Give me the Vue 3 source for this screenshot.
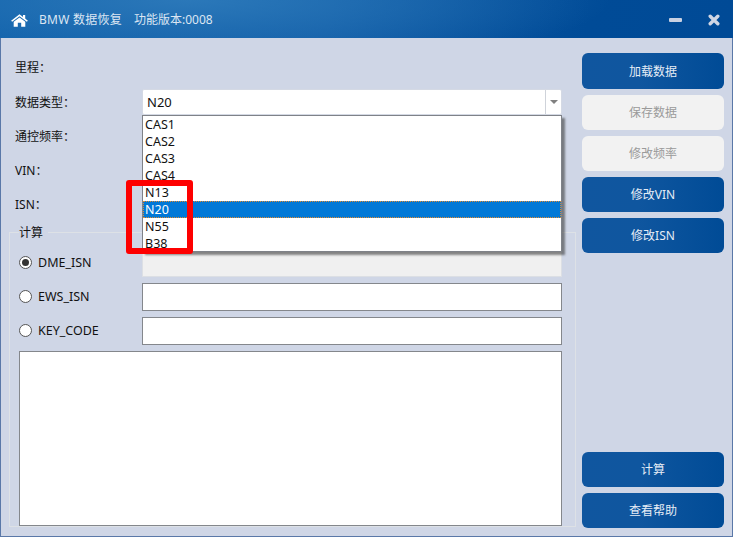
<script setup>
const options = ['CAS1', 'CAS2', 'CAS3', 'CAS4', 'N13', 'N20', 'N55', 'B38']
const selected = 'N20'
const topActions = [
  { label: '加载数据', disabled: false },
  { label: '保存数据', disabled: true },
  { label: '修改频率', disabled: true },
  { label: '修改VIN', disabled: false },
  { label: '修改ISN', disabled: false }
]
const bottomActions = ['计算', '查看帮助']
const radios = [
  { label: 'DME_ISN', checked: true, disabled: true },
  { label: 'EWS_ISN', checked: false, disabled: false },
  { label: 'KEY_CODE', checked: false, disabled: false }
]
</script>

<template>
  <div class="window">
    <header class="titlebar">
      <svg class="home" viewBox="0 0 17 15" width="17" height="13" preserveAspectRatio="none">
        <path d="M8.5 0.4 L12 3.4 V1.2 H14.2 V5.3 L16.9 7.7 L15.8 8.9 L8.5 2.6 L1.2 8.9 L0.1 7.7 Z" fill="#fff" />
        <path d="M8.5 3.9 L14.3 8.9 V14.6 H10.2 V10.2 H6.8 V14.6 H2.7 V8.9 Z" fill="#fff" />
      </svg>
      <span class="title name">BMW 数据恢复</span>
      <span class="title version">功能版本:0008</span>
      <span class="spacer"></span>
      <svg class="win-btn" viewBox="0 0 13 4" width="13" height="4">
        <rect width="13" height="4" rx="1" fill="#c9d1e2" />
      </svg>
      <svg class="win-btn close" viewBox="0 0 12 12" width="12" height="12">
        <path d="M2.2 2.2 L9.8 9.8 M9.8 2.2 L2.2 9.8" stroke="#d0d6e4" stroke-width="3.4" stroke-linecap="round" />
      </svg>
    </header>

    <main class="content">
      <section class="left">
        <div class="row first"><label>里程：</label></div>
        <div class="row">
          <label>数据类型：</label>
          <div class="combo">
            <span class="combo-value">{{ selected }}</span>
            <span class="combo-arrow"><i></i></span>
            <ul class="dropdown">
              <li v-for="o in options" :key="o" :class="{ active: o === selected }">{{ o }}</li>
            </ul>
          </div>
        </div>
        <div class="row"><label>通控频率：</label><div class="field"></div></div>
        <div class="row"><label>VIN：</label><div class="field"></div></div>
        <div class="row"><label>ISN：</label><div class="field"></div></div>

        <fieldset class="group">
          <legend>计算</legend>
          <div v-for="r in radios" :key="r.label" class="radio-row">
            <span class="radio" :class="{ checked: r.checked }"></span>
            <span class="radio-label">{{ r.label }}</span>
            <div class="field" :class="{ off: r.disabled }"></div>
          </div>
          <div class="output"></div>
        </fieldset>

        <div class="marker"></div>
      </section>

      <aside class="right">
        <div class="btns">
          <button v-for="a in topActions" :key="a.label" :class="{ off: a.disabled }">{{ a.label }}</button>
        </div>
        <div class="btns">
          <button v-for="a in bottomActions" :key="a">{{ a }}</button>
        </div>
      </aside>
    </main>
  </div>
</template>

<style>
html, body { margin: 0; background: #cfd6e6; }
</style>

<style scoped>
.window {
  width: 733px;
  height: 537px;
  box-sizing: border-box;
  display: flex;
  flex-direction: column;
  background: #cfd6e6;
  font: 12px/17px "Noto Sans", "Noto Sans CJK SC", sans-serif;
  color: #111;
  overflow: hidden;
}
.titlebar {
  height: 38px;
  flex: none;
  display: flex;
  align-items: center;
  padding: 2px 13px 0 11px;
  box-sizing: border-box;
  background:
    radial-gradient(ellipse 420px 70px at 190px 0, #2b78b9 0%, rgba(43,120,185,0) 100%),
    linear-gradient(100deg, #0c5ea9 0%, #0f5aa5 45%, #004b97 80%, #004a96 100%);
}
.home { margin-right: 11px; }
.title { color: #dce6f3; font-size: 12px; margin-top: -2px; }
.name { letter-spacing: 0.25px; }
.version { margin-left: 12px; }
.spacer { flex: 1; }
.win-btn { display: block; }
.close { margin-left: 26px; }
.content {
  flex: 1;
  display: flex;
  border-left: 1px solid #5a78a8;
  border-right: 1px solid #5a78a8;
  border-bottom: 1px solid #5a78a8;
  min-height: 0;
}
.left {
  position: relative;
  width: 575px;
  flex: none;
  box-sizing: border-box;
  padding: 16px 0 0 14px;
}
.row {
  height: 26px;
  margin-bottom: 8px;
  display: flex;
  align-items: center;
  padding-right: 14px;
}
.row.first { margin-bottom: 9px; }
.row label { width: 127px; flex: none; }
.field {
  flex: 1;
  height: 28px;
  box-sizing: border-box;
  background: #fff;
  border: 1px solid #84878c;
}
.row .field { height: 26px; }
.field.off { background: #f0f0f0; border-color: #dcdfe4; }
.combo {
  position: relative;
  flex: 1;
  height: 26px;
  box-sizing: border-box;
  background: #fff;
  border: 1px solid #d4d9e4;
  border-radius: 2px;
  display: flex;
  align-items: center;
  font-size: 13px;
}
.combo-value { flex: 1; padding-left: 4px; }
.combo-arrow {
  width: 15px;
  height: 100%;
  border-left: 1px solid #cfd3da;
  display: flex;
  align-items: center;
  justify-content: center;
}
.combo-arrow i {
  width: 0;
  height: 0;
  border: 4px solid transparent;
  border-top: 4px solid #808080;
  border-bottom: 0;
}
.dropdown {
  position: absolute;
  z-index: 2;
  left: -1px;
  right: -1px;
  top: 25px;
  margin: 0;
  padding: 0;
  height: 137px;
  box-sizing: border-box;
  list-style: none;
  background: #fff;
  border: 1px solid #7f8288;
  box-shadow: 3px 3px 2px rgba(60, 60, 60, 0.6);
  font-size: 12.5px;
}
.dropdown li {
  height: 17px;
  line-height: 17px;
  padding-left: 2px;
  box-sizing: border-box;
}
.dropdown li.active {
  background: #0078d7;
  color: #fff;
  outline: 1px dotted #e08a30;
  outline-offset: -1px;
}
.group {
  margin: 9px 0 0 -6px;
  padding: 0 13px 0 9px;
  box-sizing: border-box;
  border: 1px solid #dde1e6;
  min-width: 0;
}
.group legend {
  padding: 0 5px 0 0;
  margin-left: 0;
  line-height: 13px;
  height: 13px;
  font-size: 12px;
}
.radio-row {
  height: 28px;
  margin-bottom: 6px;
  display: flex;
  align-items: center;
}
.radio-row:first-of-type { margin-top: 10px; }
.radio {
  width: 13px;
  height: 13px;
  box-sizing: border-box;
  border-radius: 50%;
  border: 1px solid #555;
  background: #fff;
  margin: 0 6px 1px 0;
  flex: none;
  position: relative;
}
.radio.checked::after {
  content: "";
  position: absolute;
  inset: 2px;
  border-radius: 50%;
  background: #333;
}
.radio-label { width: 104px; flex: none; font-size: 12.5px; margin-bottom: 1px; }
.output {
  height: 175px;
  box-sizing: border-box;
  background: #fff;
  border: 1px solid #84878c;
}
.marker {
  position: absolute;
  z-index: 3;
  left: 125px;
  top: 142px;
  width: 67px;
  height: 74px;
  box-sizing: border-box;
  border: 6px solid #fe0000;
  border-radius: 3px;
}
.right {
  flex: 1;
  display: flex;
  flex-direction: column;
  justify-content: space-between;
  padding: 15px 8px 8px 6px;
  box-sizing: border-box;
}
.btns { display: flex; flex-direction: column; gap: 6px; }
.btns button {
  height: 35px;
  border: 0;
  border-radius: 6px;
  padding: 0;
  background: linear-gradient(90deg, #10569f 0%, #0f569f 40%, #004b96 100%);
  color: #e6edf6;
  font: inherit;
}
.btns:first-child button:first-child { height: 36px; }
.btns button.off { background: #f2f2f2; color: #9a9a9a; }
</style>
